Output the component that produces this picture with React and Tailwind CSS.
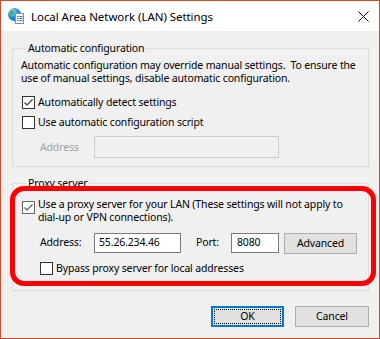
import React from "react";

function CB({ checked, grey }) {
  return (
    <span className={`w-[13px] h-[13px] border ${grey ? "border-[#666]" : "border-[#333]"} bg-white flex items-center justify-center shrink-0`}>
      {checked && (
        <svg width="11" height="11" viewBox="0 0 11 11">
          <path d="M1.5 5.5 L4 8 L9.5 2.5" stroke={grey ? "#555" : "#333"} fill="none" strokeWidth="1.1" />
        </svg>
      )}
    </span>
  );
}

function Icon() {
  return (
    <svg width="18" height="18" viewBox="0 0 18 18">
      <defs>
        <radialGradient id="g" cx="0.35" cy="0.3" r="0.8">
          <stop offset="0" stopColor="#9fe0ff" />
          <stop offset="0.5" stopColor="#2a8fd8" />
          <stop offset="1" stopColor="#1459a8" />
        </radialGradient>
      </defs>
      <circle cx="7.5" cy="7.5" r="6.5" fill="url(#g)" />
      <path d="M3 5 Q5 3 7 4 Q8 6 6 7 Q4 8 3 7 Z" fill="#4caf3c" />
      <path d="M8 9 Q10 8 11 10 Q10 12 8 12 Z" fill="#4caf3c" />
      <rect x="8.5" y="6.5" width="8" height="10" fill="#f4f8fc" stroke="#7d93ad" />
      <rect x="10" y="9" width="1.5" height="1" fill="#2a6fc0" />
      <rect x="12.5" y="9" width="3" height="1" fill="#2a6fc0" />
      <rect x="10" y="11" width="1.5" height="1" fill="#2a6fc0" />
      <rect x="12.5" y="11" width="3" height="1" fill="#2a6fc0" />
      <rect x="10" y="13" width="1.5" height="1" fill="#2a6fc0" />
      <rect x="12.5" y="13" width="3" height="1" fill="#2a6fc0" />
    </svg>
  );
}

export default function App() {
  return (
    <div className="w-[380px] h-[339px] border border-[#cf4b28] bg-[#f0f0f0] relative flex flex-col font-['Noto_Sans',sans-serif] text-[10.5px] tracking-[-0.15px] leading-[13px] text-black overflow-hidden">
      {/* Title bar */}
      <div className="h-[30px] bg-white flex items-center pl-[6px] pr-[10px] shrink-0">
        <Icon />
        <span className="ml-[6px] text-[11.5px] tracking-[-0.05px]">Local Area Network (LAN) Settings</span>
        <svg className="ml-auto" width="11" height="11" viewBox="0 0 11 11">
          <path d="M0.5 0.5 L10.5 10.5 M10.5 0.5 L0.5 10.5" stroke="#000" strokeWidth="1" />
        </svg>
      </div>

      <div className="flex flex-col pl-[11px] pr-[10px] pt-[10px]">
        {/* Automatic configuration */}
        <fieldset className="border border-[#dcdcdc] pl-[8px] pb-[8px]">
          <legend className="ml-[5px] px-[2px] leading-[14px]">Automatic configuration</legend>
          <div className="mt-[4px] whitespace-pre">
            {"Automatic configuration may override manual settings.  To ensure the\nuse of manual settings, disable automatic configuration."}
          </div>
          <div className="mt-[11px] flex items-center gap-[3px] ml-[1px]">
            <CB checked />
            <span>Automatically detect settings</span>
          </div>
          <div className="mt-[7px] flex items-center gap-[3px] ml-[1px]">
            <CB />
            <span>Use automatic configuration script</span>
          </div>
          <div className="mt-[7px] flex items-center">
            <span className="w-[73px] pl-[19px] text-[#a0a0a0]">Address</span>
            <div className="w-[185px] h-[22px] border border-[#cccccc] bg-[#f0f0f0]" />
          </div>
        </fieldset>

        {/* Proxy server */}
        <fieldset className="mt-[9px] border border-[#dcdcdc] pl-[8px] pb-[15px]">
          <legend className="ml-[5px] px-[2px] leading-[14px]">Proxy server</legend>
          <div className="mt-[8px] flex items-start gap-[3px] ml-[1px]">
            <span className="mt-[3px]"><CB checked grey /></span>
            <span className="whitespace-pre">
              {"Use a proxy server for your LAN (These settings will not apply to\ndial-up or VPN connections)."}
            </span>
          </div>
          <div className="mt-[7px] flex items-center">
            <span className="w-[73px] pl-[19px]">Address:</span>
            <div className="w-[87px] h-[20px] border border-[#7a7a7a] bg-white flex items-center pl-[4px]">55.26.234.46</div>
            <span className="ml-[15px] w-[35px]">Port:</span>
            <div className="w-[48px] h-[20px] border border-[#7a7a7a] bg-white flex items-center pl-[5px]">8080</div>
            <button className="ml-[5px] mt-[2px] w-[73px] h-[21px] border border-[#adadad] bg-[#e1e1e1] flex items-center justify-center">Advanced</button>
          </div>
          <div className="mt-[8px] flex items-center gap-[3px] ml-[19px]">
            <CB />
            <span>Bypass proxy server for local addresses</span>
          </div>
        </fieldset>
      </div>

      {/* Buttons */}
      <div className="mt-[15px] flex justify-end gap-[11px] pr-[10px]">
        <button className="relative w-[73px] h-[21px] border-2 border-[#0078d7] bg-[#e1e1e1] flex items-center justify-center">
          <span className="absolute inset-[1px] border border-dotted border-black" />
          OK
        </button>
        <button className="w-[74px] h-[21px] border border-[#adadad] bg-[#e1e1e1] flex items-center justify-center">Cancel</button>
      </div>

      {/* Red annotation */}
      <div className="absolute left-[9px] top-[185px] w-[366px] h-[100px] border-[5px] border-[#ff0000] rounded-[14px] pointer-events-none" />
    </div>
  );
}
